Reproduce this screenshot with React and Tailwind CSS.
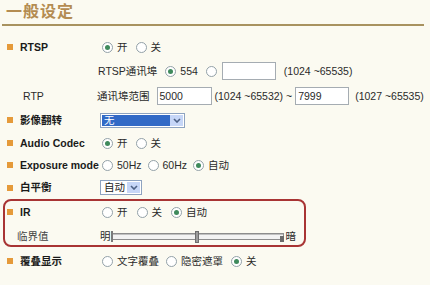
import React from 'react';

// Small XP-style radio
const Radio = ({ checked }) => (
  <span className="inline-flex w-[11px] h-[11px] rounded-full border border-[#93a1a8] bg-white items-center justify-center shrink-0">
    {checked && <span className="w-[5px] h-[5px] rounded-full bg-[#3f8a5c]" />}
  </span>
);

const Option = ({ checked, label, className = 'mr-[7px]' }) => (
  <span className={`flex items-center gap-[4px] ${className}`}>
    <Radio checked={checked} />
    <span>{label}</span>
  </span>
);

const Row = ({ label, bullet = true, bold = true, height = 'h-[22px]', children }) => (
  <div className={`flex items-center ${height}`}>
    <div className="w-[93px] flex items-center shrink-0">
      <span className={`w-[6px] h-[6px] ${bullet ? 'bg-[#e59a3a]' : ''}`} />
      <span className={`ml-[7px] ${bold ? 'font-bold text-[#1a1a1a]' : ''}`}>{label}</span>
    </div>
    <div className="flex items-center">{children}</div>
  </div>
);

const Box = ({ value, width = 'w-[55px]' }) => (
  <span className={`${width} h-[18px] border border-[#a5acb2] bg-white px-[2px] flex items-center`}>
    {value}
  </span>
);

const Chevron = () => (
  <svg width="8" height="5" viewBox="0 0 8 5">
    <path d="M1 1 L4 4 L7 1" fill="none" stroke="#4d6185" strokeWidth="1.6" />
  </svg>
);

const Select = ({ value, width, selected }) => (
  <div className={`${width} h-[15px] border border-[#8ea3c0] bg-white flex p-[1px]`}>
    <div
      className={`flex-1 flex items-center pl-[2px] ${selected ? 'bg-[#3169c6] text-white' : 'text-[#1a1a1a]'}`}
    >
      {value}
    </div>
    <div className="w-[13px] bg-[#c6d6f7] flex items-center justify-center">
      <Chevron />
    </div>
  </div>
);

const App = () => {
  return (
    <div
      className="w-[430px] h-[285px] overflow-hidden bg-[#fbfaf1] text-[10.5px] text-[#2a2a2a] leading-none"
      style={{ fontFamily: '"Liberation Sans", "Noto Sans CJK SC", sans-serif' }}
    >
      {/* Title */}
      <div className="h-[24px] pl-[6px] flex items-center">
        <span className="text-[16px] font-bold tracking-[1px] text-[#b48c52]">一般设定</span>
      </div>
      <div className="ml-[2px] w-[422px] h-[2px] bg-[#a8925f]" />

      <div className="pt-[10px]">
        <div className="pl-[7px]">
          <Row label="RTSP">
            <span className="ml-[2px]" />
            <Option checked label="开" className="mr-[8px]" />
            <Option label="关" />
          </Row>

          <div className="flex items-center h-[26px] pl-[91px]">
            <span>RTSP通讯埠</span>
            <Option checked label="554" className="ml-[8px] mr-[8px]" />
            <Radio />
            <span className="ml-[5px]">
              <Box value="" width="w-[54px]" />
            </span>
            <span className="ml-[8px]">(1024 ~65535)</span>
          </div>

          <Row label={<span className="ml-[3px]">RTP</span>} bullet={false} bold={false} height="h-[24px]">
            <span className="-ml-[3px]">通讯埠范围</span>
            <span className="ml-[7px]">
              <Box value="5000" />
            </span>
            <span className="ml-[3px]">(1024 ~65532) ~</span>
            <span className="ml-[3px]">
              <Box value="7999" width="w-[54px]" />
            </span>
            <span className="ml-[6px]">(1027 ~65535)</span>
          </Row>

          <Row label="影像翻转" height="h-[24px]">
            <Select value="无" width="w-[85px]" selected />
          </Row>

          <Row label="Audio Codec">
            <span className="ml-[2px]" />
            <Option checked label="开" className="mr-[8px]" />
            <Option label="关" />
          </Row>

          <Row label="Exposure mode">
            <span className="ml-[2px]" />
            <Option label="50Hz" className="mr-[6px]" />
            <Option label="60Hz" className="mr-[6px]" />
            <Option checked label="自动" />
          </Row>

          <Row label="白平衡" height="h-[23px]">
            <Select value="自动" width="w-[42px]" />
          </Row>
        </div>

        {/* Highlighted IR block */}
        <div className="ml-[3px] w-[303px] border-2 border-[#a83434] rounded-[8px] pl-[2px]">
          <Row label="IR">
            <span className="ml-[2px]" />
            <Option label="开" className="mr-[9px]" />
            <Option label="关" className="mr-[9px]" />
            <Option checked label="自动" />
          </Row>
          <div className="flex items-center h-[22px] pt-[4px]">
            <div className="w-[93px] shrink-0 pl-[10px] text-[#444]">临界值</div>
            <span>明</span>
            <div className="relative w-[173px] h-[13px]">
              <div className="absolute left-0 right-0 top-[3px] h-[7px] border border-[#8c8c8c] bg-[#f2f2f2] shadow-[inset_0_1px_0_#c0c0c0]" />
              <div className="absolute left-0 top-[1px] w-[2px] h-[11px] bg-[#7a7a7a]" />
              <div className="absolute left-[84px] top-[1px] w-[4px] h-[12px] bg-[#9c9c9c] border border-[#6e6e6e]" />
              <div className="absolute right-0 top-[6px] w-[4px] h-[6px] bg-[#6a6a6a]" />
            </div>
            <span className="ml-[2px]">暗</span>
          </div>
        </div>

        <div className="pl-[7px] mt-[3px]">
          <Row label="覆叠显示">
            <span className="ml-[2px]" />
            <Option label="文字覆叠" className="mr-[7px]" />
            <Option label="隐密遮罩" className="mr-[8px]" />
            <Option checked label="关" />
          </Row>
        </div>
      </div>
    </div>
  );
};

export default App;
